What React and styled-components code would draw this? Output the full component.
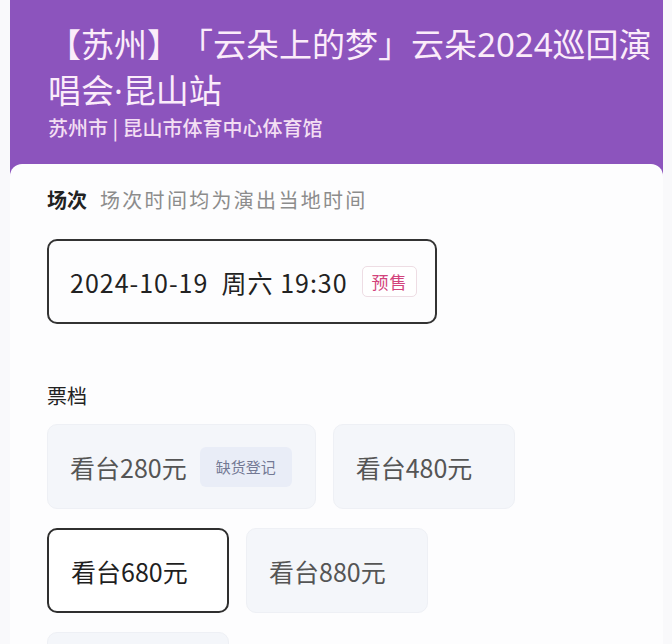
import React from "react";
import styled, { createGlobalStyle } from "styled-components";

const Global = createGlobalStyle`
  html, body { margin: 0; padding: 0; background: #f9f9fb; }
  body {
    font-family: "Noto Sans CJK SC", "Noto Sans", sans-serif;
    text-spacing-trim: space-all;
  }
`;

const Page = styled.div`
  width: 672px;
  height: 644px;
  overflow: hidden;
  padding: 0 9px 0 10px;
  box-sizing: border-box;
  background: #f9f9fb;
`;

const Header = styled.header`
  background: #8c54bd;
  padding: 22px 6px 34px 38px;
`;

const Title = styled.h1`
  margin: 0;
  font-family: "Noto Sans", "Noto Sans CJK SC", sans-serif;
  font-size: 33px;
  line-height: 46px;
  font-weight: 400;
  color: #fbecfa;
  text-spacing-trim: space-all;
`;

const Venue = styled.div`
  margin-top: 0;
  font-size: 20px;
  line-height: 28px;
  font-weight: 500;
  color: #f3def3;
`;

const Card = styled.main`
  margin-top: -12px;
  background: #fdfdfe;
  border-radius: 12px 12px 0 0;
  padding: 22px 37px 0;
  min-height: 500px;
`;

const SectionHead = styled.div`
  display: flex;
  align-items: baseline;
  gap: 13px;
  line-height: 28px;
`;

const SectionTitle = styled.span`
  font-size: 20px;
  font-weight: ${(p) => (p.$bold ? 700 : 400)};
  color: #222;
`;

const Note = styled.span`
  font-size: 20px;
  letter-spacing: 2.3px;
  color: #8c8c8c;
`;

const DateBox = styled.div`
  margin-top: 25px;
  width: 390px;
  height: 85px;
  box-sizing: border-box;
  border: 2px solid #333;
  border-radius: 10px;
  display: flex;
  align-items: center;
  padding: 0 0 0 21px;
  gap: 14px;
  font-size: 25px;
  letter-spacing: 1px;
  color: #222;
`;

const DateText = styled.span`
  white-space: pre;
`;

const PreSale = styled.span`
  flex-shrink: 0;
  white-space: nowrap;
  font-size: 17px;
  letter-spacing: 1px;
  color: #d2437c;
  border: 1px solid #eedde4;
  border-radius: 5px;
  padding: 0 8px 0 9px;
  line-height: 29px;
  background: #fff;
`;

const TicketSection = styled.div`
  margin-top: 58px;
`;

const Grid = styled.div`
  margin-top: 14px;
  display: flex;
  flex-wrap: wrap;
  gap: 19px 17px;
  width: 480px;
`;

const Ticket = styled.div`
  min-width: 182px;
  height: 85px;
  box-sizing: border-box;
  border-radius: 10px;
  display: flex;
  align-items: center;
  gap: 13px;
  padding: 0 23px 0 22px;
  font-size: 25px;
  white-space: nowrap;
  color: ${(p) => (p.$selected ? "#1f1f1f" : "#555")};
  background: ${(p) => (p.$selected ? "#fff" : "#f4f6fa")};
  border: ${(p) => (p.$selected ? "2px solid #2f2f2f" : "1px solid #eef0f5")};
`;

const Shortage = styled.span`
  font-size: 15px;
  color: #737994;
  background: #e9edf7;
  border-radius: 6px;
  padding: 0 16px;
  line-height: 40px;
`;

const tickets = [
  { label: "看台280元", tag: "缺货登记" },
  { label: "看台480元" },
  { label: "看台680元", selected: true },
  { label: "看台880元" },
  { label: "" },
];

export default function App() {
  return (
    <Page>
      <Global />
      <Header>
        <Title>【苏州】「云朵上的梦」云朵2024巡回演唱会·昆山站</Title>
        <Venue>苏州市 | 昆山市体育中心体育馆</Venue>
      </Header>
      <Card>
        <SectionHead>
          <SectionTitle $bold>场次</SectionTitle>
          <Note>场次时间均为演出当地时间</Note>
        </SectionHead>
        <DateBox>
          <DateText>2024-10-19  周六 19:30</DateText>
          <PreSale>预售</PreSale>
        </DateBox>
        <TicketSection>
          <SectionHead>
            <SectionTitle>票档</SectionTitle>
          </SectionHead>
          <Grid>
            {tickets.map((t, i) => (
              <Ticket key={i} $selected={t.selected}>
                {t.label}
                {t.tag && <Shortage>{t.tag}</Shortage>}
              </Ticket>
            ))}
          </Grid>
        </TicketSection>
      </Card>
    </Page>
  );
}
